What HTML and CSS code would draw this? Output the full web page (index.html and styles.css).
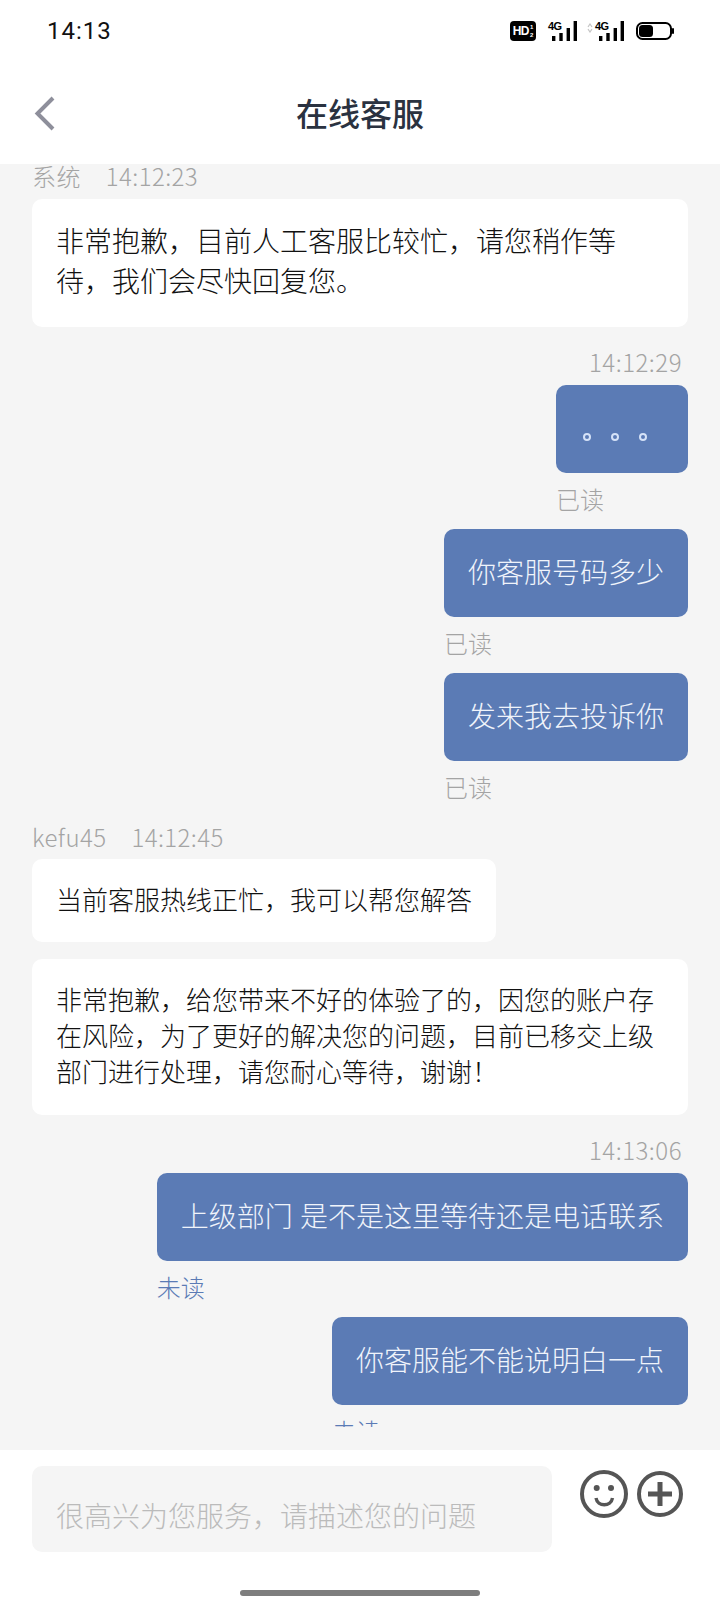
FILE: index.html
```html
<!DOCTYPE html>
<html lang="zh">
<head>
<meta charset="utf-8">
<title>在线客服</title>
<link rel="stylesheet" href="styles.css">
</head>
<body>
<div class="app">
  <header class="status">
    <span class="clock">14:13</span>
    <div class="indicators">
      <span class="hd"><span class="hd-t">HD</span><span class="hd-f">1<br>2</span></span>
      <span class="sig"><span class="sig-t">4G</span><svg class="bars" width="25" height="20" viewBox="0 0 25 20"><path d="M0 15h3.4v5H0zM7.3 12h3.4v8H7.3zM14.6 7h3.4v13h-3.4zM21.6 0H25v20h-3.4z" fill="#000"/></svg></span>
      <span class="sig sig2"><svg class="updown" width="6" height="10" viewBox="0 0 6 10"><path d="M1 4l2-3 2 3M1 6l2 3 2-3" fill="none" stroke="#c4c4c4" stroke-width="1.2"/></svg><span class="sig-t">4G</span><svg class="bars" width="25" height="20" viewBox="0 0 25 20"><path d="M0 15h3.4v5H0zM7.3 12h3.4v8H7.3zM14.6 7h3.4v13h-3.4zM21.6 0H25v20h-3.4z" fill="#000"/></svg></span>
      <svg class="battery" width="38" height="18" viewBox="0 0 38 18"><rect x="1" y="1" width="34" height="16" rx="5.5" fill="none" stroke="#000" stroke-width="2"/><rect x="3" y="3" width="14" height="12" rx="3.5" fill="#000"/><rect x="36" y="6" width="2" height="6" rx="1" fill="#000"/></svg>
    </div>
  </header>
  <nav class="nav">
    <svg class="back" width="24" height="38" viewBox="0 0 24 38"><path d="M20 3 4.500 18.500 20 34" fill="none" stroke="#8e8f9b" stroke-width="4"/></svg>
    <h1 class="title">在线客服</h1>
  </nav>
  <main class="chat">
    <div class="thread">
      <div class="meta meta-first"><span>系统</span><span>14:12:23</span></div>
      <div class="bubble in tall">非常抱歉，目前人工客服比较忙，请您稍作等待，我们会尽快回复您。</div>
      <div class="time">14:12:29</div>
      <div class="out-group">
        <div class="bubble out dots"><span class="dot"></span><span class="dot"></span><span class="dot"></span></div>
        <div class="state">已读</div>
      </div>
      <div class="out-group">
        <div class="bubble out">你客服号码多少</div>
        <div class="state">已读</div>
      </div>
      <div class="out-group">
        <div class="bubble out">发来我去投诉你</div>
        <div class="state">已读</div>
      </div>
      <div class="meta meta-kefu"><span>kefu45</span><span>14:12:45</span></div>
      <div class="bubble in short">当前客服热线正忙，我可以帮您解答</div>
      <div class="bubble in">非常抱歉，给您带来不好的体验了的，因您的账户存在风险，为了更好的解决您的问题，目前已移交上级部门进行处理，请您耐心等待，谢谢！</div>
      <div class="time">14:13:06</div>
      <div class="out-group">
        <div class="bubble out">上级部门 是不是这里等待还是电话联系</div>
        <div class="state unread">未读</div>
      </div>
      <div class="out-group">
        <div class="bubble out">你客服能不能说明白一点</div>
        <div class="state unread">未读</div>
      </div>
    </div>
  </main>
  <footer class="composer">
    <div class="input">很高兴为您服务，请描述您的问题</div>
    <svg class="smile" width="48" height="48" viewBox="0 0 48 48"><circle cx="24" cy="24" r="22" fill="none" stroke="#555" stroke-width="4"/><circle cx="16.700" cy="18" r="3" fill="#555"/><circle cx="31" cy="18" r="3" fill="#555"/><path d="M16 28c1.500 9 15 9 16.500 0" fill="none" stroke="#555" stroke-width="3.4"/></svg>
    <svg class="plus" width="46" height="46" viewBox="0 0 46 46"><circle cx="23" cy="23" r="21" fill="none" stroke="#555" stroke-width="4"/><path d="M23 11v24M11 23h24" stroke="#555" stroke-width="5"/></svg>
  </footer>
  <div class="home"></div>
</div>
</body>
</html>
```
FILE: styles.css
```css
* { box-sizing: border-box; }
html, body { margin: 0; padding: 0; }
body { font-family: "Noto Sans CJK SC", "Noto Sans", sans-serif; font-weight: 300; background: #fff; }
.app { width: 720px; height: 1600px; display: flex; flex-direction: column; overflow: hidden; background: #fff; position: relative; }
.status { height: 60px; flex: none; display: flex; align-items: center; justify-content: space-between; padding: 2px 46px 0 47px; }
.clock { font-family: Roboto, sans-serif; font-weight: 400; font-size: 24px; letter-spacing: 1px; color: #111; }
.indicators { display: flex; align-items: center; }
.hd { width: 26px; height: 20px; background: #000; border-radius: 4px; color: #fff; display: flex; align-items: center; justify-content: center; font: 700 12px/1 "Liberation Sans", sans-serif; }
.hd-t { font-size: 12px; letter-spacing: -0.5px; }
.hd-f { font-size: 6px; line-height: 8px; margin-left: 1px; }
.sig { position: relative; display: block; width: 29px; height: 20px; margin-left: 12px; }
.bars { position: absolute; right: 0; bottom: 0; display: block; }
.sig-t { position: absolute; left: 0; top: -1px; font: 700 11px/12px "Liberation Sans", sans-serif; letter-spacing: -0.5px; color: #000; }
.sig2 { width: 37px; margin-left: 10px; }
.sig2 .sig-t { left: 8px; }
.updown { position: absolute; left: 0; top: 2px; display: block; }
.battery { display: block; margin-left: 12px; }
.nav { height: 104px; flex: none; display: flex; align-items: center; justify-content: center; position: relative; }
.back { position: absolute; left: 33px; top: 35px; }
.title { margin: 0; font-size: 32px; font-weight: 500; color: #2a3240; line-height: 44px; }
.chat { height: 1286px; flex: none; background: #f5f5f5; padding-bottom: 23px; }
.thread { height: 1271px; margin-top: -8px; overflow: hidden; padding: 8px 32px 0; display: flex; flex-direction: column; align-items: flex-start; }
.meta { flex: none; display: flex; gap: 25px; font-size: 24px; line-height: 24px; letter-spacing: 0.4px; color: #a4a4a4; height: 34px; }
.meta-first { height: 35px; }
.meta-kefu { margin-top: 8px; }
.bubble { flex: none; border-radius: 10px; }
.in { background: #fff; color: #111; width: 656px; font-size: 26px; line-height: 36px; padding: 22px 24px 26px; }
.tall { font-size: 28px; line-height: 40px; padding: 21px 72px 27px 24px; }
.short { width: auto; height: 83px; margin-bottom: 17px; }
.out { background: #5b7bb5; color: #f0f4fb; font-size: 28px; line-height: 40px; padding: 22px 24px 26px; word-spacing: 1px; }
.out-group { flex: none; align-self: flex-end; display: flex; flex-direction: column; align-items: flex-start; }
.time { flex: none; align-self: flex-end; font-size: 24px; line-height: 24px; letter-spacing: 0.5px; color: #a4a4a4; margin: 23px 6px 11px 0; }
.dots { width: 132px; height: 88px; display: flex; align-items: center; gap: 20px; padding: 40px 0 24px 27px; }
.dot { width: 8px; height: 8px; border: 2px solid #d5e2f7; border-radius: 50%; }
.state { font-size: 24px; line-height: 30px; color: #a4a4a4; margin: 11px 0 15px; }
.unread { color: #5b7bb5; }
.composer { height: 150px; flex: none; background: #fff; display: flex; align-items: flex-start; padding: 16px 0 0 32px; }
.input { width: 520px; height: 86px; background: #f5f5f5; border-radius: 10px; padding: 29px 24px 0; font-size: 28px; line-height: 40px; color: #bbb; }
.smile { display: block; margin: 4px 0 0 28px; }
.plus { display: block; margin: 5px 0 0 9px; }
.home { position: absolute; left: 240px; top: 1590px; width: 240px; height: 6px; border-radius: 3px; background: #7e7e7e; }
```
